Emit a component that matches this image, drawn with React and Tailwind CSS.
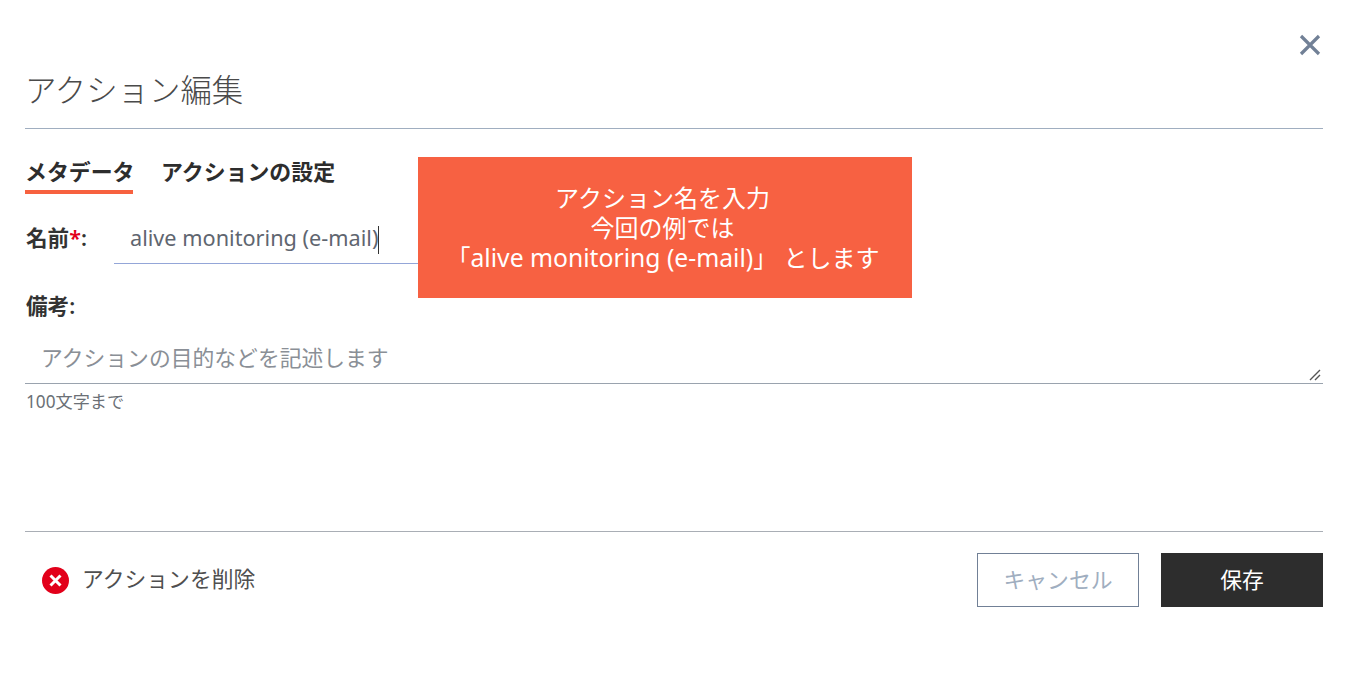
export default function App() {
  return (
    <div className="relative w-[1350px] h-[674px] overflow-hidden bg-white pl-[25px] pr-[27px] font-['Noto_Sans','Noto_Sans_CJK_JP',sans-serif] text-[#333333]">
      <div className="flex justify-end h-[69px] pt-[33px] pr-[1px]">
        <svg width="24" height="24" viewBox="0 0 24 24" className="text-[#718096]">
          <path d="M3 3 L21 21 M21 3 L3 21" stroke="currentColor" strokeWidth="3.2" fill="none" />
        </svg>
      </div>
      <h1 className="h-[60px] border-b border-[#a0aec0] text-[31.4px] leading-[42px] font-light text-[#4a4a4a]">アクション編集</h1>
      <div className="flex gap-[28px] mt-[26px] h-[39px] text-[21.9px] leading-[34px] font-semibold text-[#2d2d2d]">
        <div className="h-[39px] w-[108px] border-b-[4px] border-[#f7613f] whitespace-nowrap">メタデータ</div>
        <div className="whitespace-nowrap">アクションの設定</div>
      </div>
      <div className="flex mt-[14px] h-[56px]">
        <label className="w-[89px] pl-[1px] pt-[14px] text-[21.6px] leading-[32px] font-semibold text-[#333333]">名前<span className="text-[#e2001a]">*</span>:</label>
        <div className="w-[420px] h-[56px] border-b border-[#94a6d8] pl-[16px] pt-[14px] text-[21.7px] leading-[32px] text-[#5f6670] whitespace-nowrap">
          alive monitoring (e-mail)<span className="inline-block align-middle w-px h-[28px] bg-[#333333]" />
        </div>
      </div>
      <div className="mt-[26px] pl-[1px] text-[21.6px] leading-[32px] font-semibold text-[#333333]">備考:</div>
      <div className="relative mt-[9px] h-[53px] border-b border-[#9aa3ae] pl-[16px] pt-[11px] text-[21.8px] leading-[32px] text-[#8a8f96]">
        アクションの目的などを記述します
        <svg width="14" height="14" viewBox="0 0 14 14" className="absolute right-[1px] bottom-[1px] text-[#555555]">
          <path d="M2 12 L12 2 M7 12 L12 7" stroke="currentColor" strokeWidth="1.4" fill="none" />
        </svg>
      </div>
      <div className="mt-[6px] pl-[1px] text-[17.2px] leading-[24px] text-[#6b7076]">100文字まで</div>
      <div className="mt-[117px] border-t border-[#a9aeb5] pt-[21px] flex items-center justify-between">
        <div className="flex items-center pl-[17px] gap-[13px]">
          <svg width="27" height="27" viewBox="0 0 27 27">
            <circle cx="13.5" cy="13.5" r="13.5" fill="#e2001a" />
            <path d="M8.5 8.5 L18.5 18.5 M18.5 8.5 L8.5 18.5" stroke="#ffffff" strokeWidth="3" fill="none" />
          </svg>
          <span className="pb-[2px] text-[21.8px] leading-[32px] text-[#4f4f4f]">アクションを削除</span>
        </div>
        <div className="flex gap-[22px]">
          <div className="w-[162px] h-[54px] border border-[#718096] flex items-center justify-center text-[21.8px] text-[#a0aec0]">キャンセル</div>
          <div className="w-[162px] h-[54px] bg-[#2d2d2d] flex items-center justify-center text-[21.8px] text-white">保存</div>
        </div>
      </div>
      <div className="absolute left-[418px] top-[157px] w-[494px] h-[141px] bg-[#f76142] flex flex-col items-center justify-center text-white text-[24px] leading-[30px] whitespace-nowrap">
        <div className="pr-[5px]">アクション名を入力</div>
        <div className="pr-[5px]">今回の例では</div>
        <div className="pr-[4px]">「<span className="text-[24.7px]">alive monitoring (e-mail)</span>」 とします</div>
      </div>
    </div>
  );
}
